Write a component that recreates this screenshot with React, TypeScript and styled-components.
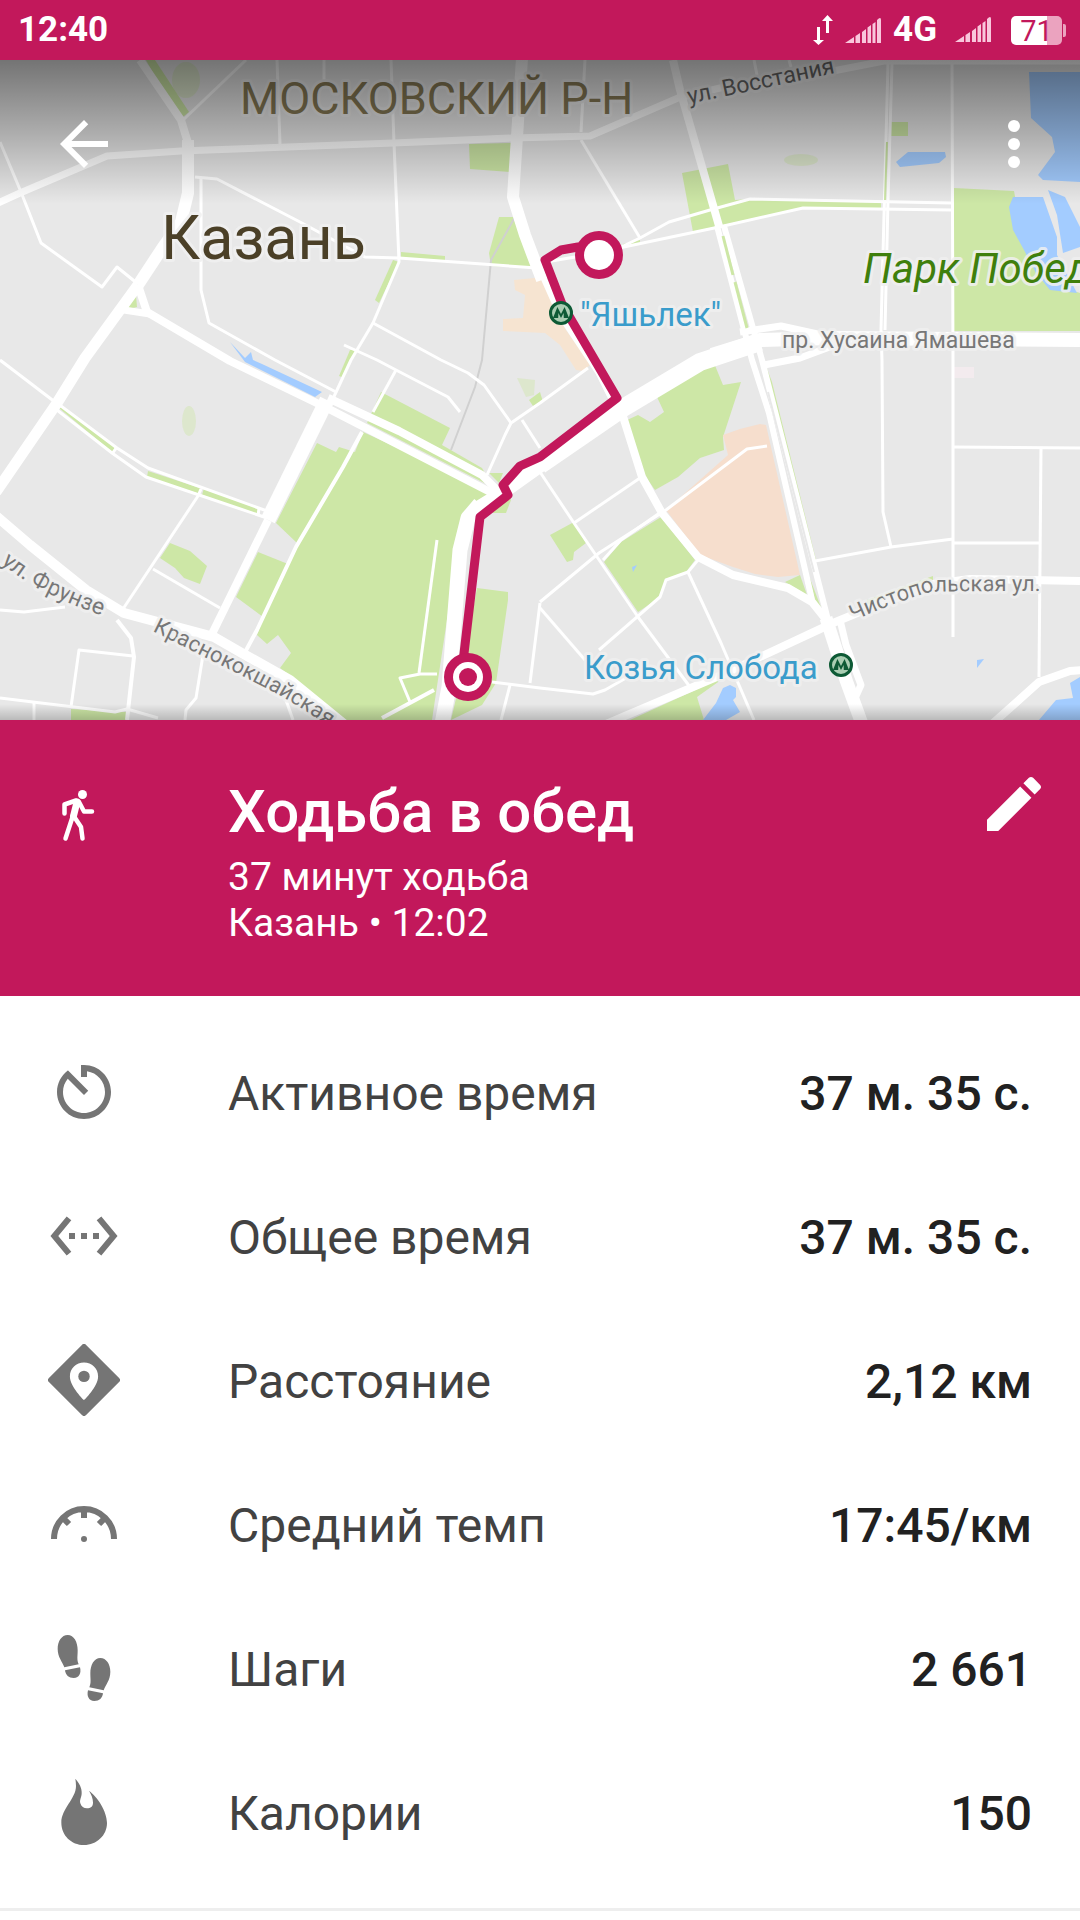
import React from "react";
import styled, { createGlobalStyle } from "styled-components";

const CRIMSON = "#c2185b";

const GlobalStyle = createGlobalStyle`
  *, *::before, *::after { box-sizing: border-box; }
  body { margin: 0; background: #fff; font-family: Roboto, "Noto Sans", sans-serif; }
`;

/* ---------- status bar ---------- */

const StatusBar = styled.div`
  display: flex;
  align-items: center;
  height: 60px;
  padding: 0 14px 0 18px;
  background: ${CRIMSON};
  color: #fff;
  font-size: 35px;
  font-weight: 700;
  line-height: 36px;
`;

const StatusIcons = styled.div`
  display: flex;
  align-items: center;
  gap: 12px;
  margin-left: auto;
`;

const SecondSim = styled.div`
  display: flex;
  gap: 20px;
  margin-left: 6px;
`;

const Battery = styled.div`
  display: flex;
  align-items: center;
  gap: 1px;
`;

const BatteryBody = styled.div<{ $level: number }>`
  width: 51px;
  height: 29px;
  border-radius: 5px;
  background: linear-gradient(90deg, #fff ${(p) => p.$level}%, #eba3bf ${(p) => p.$level}%);
  color: ${CRIMSON};
  font-size: 29px;
  font-weight: 400;
  line-height: 31px;
  text-align: center;
`;

const BatteryNub = styled.div`
  width: 3px;
  height: 13px;
  border-radius: 0 2px 2px 0;
  background: #eba3bf;
`;

/* ---------- map ---------- */

const MapArea = styled.section`
  position: relative;
  overflow: hidden;
`;

const MapDrawing = styled.svg`
  display: block;
  width: 100%;
  aspect-ratio: 18 / 11;
  background: #e8e8e8;
`;

const TopShade = styled.div`
  position: absolute;
  inset: 0 0 auto;
  height: 144px;
  background: linear-gradient(rgba(0, 0, 0, 0.5), rgba(0, 0, 0, 0.26) 50%, rgba(0, 0, 0, 0));
`;

const BottomShade = styled.div`
  position: absolute;
  inset: auto 0 0;
  height: 16px;
  background: linear-gradient(rgba(0, 0, 0, 0), rgba(0, 0, 0, 0.2));
`;

const Toolbar = styled.div`
  position: absolute;
  inset: 0 0 auto;
  display: flex;
  justify-content: space-between;
  padding: 48px 30px 0 48px;
`;

const IconButton = styled.button`
  display: block;
  padding: 0;
  border: 0;
  background: none;
  color: #fff;
  cursor: pointer;
`;

const Icon = styled.svg`
  display: block;
  width: 72px;
  height: 72px;
  fill: currentColor;
`;

const Label = styled.text<{ $size: number; $color: string; $italic?: boolean }>`
  font-size: ${(p) => p.$size}px;
  font-style: ${(p) => (p.$italic ? "italic" : "normal")};
  fill: ${(p) => p.$color};
  stroke: rgba(240, 240, 240, 0.85);
  stroke-width: 6px;
  stroke-linejoin: round;
  paint-order: stroke;
`;

const parks = [
  "146,60 155,60 189,112 179,120",
  "469,144 512,143 510,172 470,169",
  "499,217 513,217 534,268 491,266 489,253",
  "401,252 445,256 445,261 401,258",
  "393,260 399,262 379,303 375,300",
  "136,295 137,307 124,310",
  "350,350 356,350 344,378 339,376",
  "59,408 64,407 115,447 112,452",
  "148,471 200,488 200,494 147,477",
  "204,488 259,508 258,515 202,495",
  "170,543 190,551 207,566 200,584 184,578 175,568 160,558",
  "363,432 496,493 475,510 460,533 436,693 432,720 344,720 300,683 280,668 291,653 278,635 267,644 257,635 263,617 236,597 258,552 288,564 297,543 276,523 317,443 336,452 339,447 355,452",
  "381,392 450,428 442,445 482,468 494,488 367,423",
  "489,473 503,473 499,483",
  "508,490 511,500 506,513 492,513",
  "477,588 508,592 508,600 496,683 482,705 451,720 461,677",
  "529,400 540,392 543,402 533,406",
  "71,709 126,712 126,720 71,720",
  "682,173 728,164 735,200 750,199 881,202 881,208 803,208 723,225 693,232",
  "623,244 640,240 640,243 623,248",
  "891,122 908,122 908,136 891,136",
  "954,188 1014,191 1025,250 1040,280 1080,293 1080,331 954,331",
  "627,420 638,415 650,422 664,412 657,397 709,363 714,363 723,385 741,382 723,437 724,450 700,458 678,477 655,490 643,473",
  "550,535 574,522 586,543 574,552 573,560 567,562",
  "661,517 695,560 686,572 666,580 659,598 638,612 604,562 621,542",
  "785,582 800,575 807,595",
  "809,576 822,610 815,600",
  "766,366 772,382 816,560 813,560",
  "697,697 704,720 630,720 728,675",
  "867,600 933,576 933,582 867,607",
];

const sand = [
  "514,280 545,277 560,305 566,330 585,357 590,365 583,371 576,370 560,345 545,333 503,331 503,319 523,318 525,295 515,290",
];

const malls = ["723,435 740,429 760,424 766,425 800,575 778,577 755,574 733,567 700,555 666,510 728,455"];

const water = [
  "230,342 245,358 251,352 253,360 262,364 322,392 315,397 245,362",
  "896,162 908,152 945,152 946,157 939,163 900,167",
  "1029,72 1080,72 1080,182 1043,180 1038,175 1055,152 1052,137 1031,118",
  "1013,197 1043,197 1057,237 1057,255 1077,293 1050,290 1036,273 1024,250 1013,230 1009,207",
  "1048,190 1065,197 1080,227 1080,247 1063,253 1057,215",
  "1080,677 1070,683 1073,698 1056,700 1039,720 1080,720",
  "977,660 984,659 977,668",
  "632,567 637,565 633,572",
  "723,688 730,685 736,688 736,697 733,700 740,712 726,720 703,720 716,703",
];

const roads: Array<[number, string]> = [
  [7, "-2,203 20,193 107,156 181,151 393,143 513,138 590,136 678,98 720,88 833,71 884,61 1080,61"],
  [8, "140,60 181,120 188,143"],
  [12, "188,140 188,193 181,222 163,247 138,285"],
  [11, "138,285 85,358 57,403 -4,492"],
  [8, "138,285 147,312 230,361 327,408 496,495"],
  [7, "124,310 150,314"],
  [8, "328,398 399,431 448,457 482,475 499,492"],
  [3, "0,142 21,192 41,243 102,287 117,267 138,284"],
  [3, "195,177 217,179 300,222 365,257 399,258 537,268"],
  [3, "201,178 201,290 209,323 275,360 336,392"],
  [3, "391,60 394,143 399,262 373,323 351,360 331,403"],
  [3, "277,60 280,144"],
  [3, "324,60 324,80"],
  [3, "246,60 181,122"],
  [3, "373,323 441,360 468,373 484,385 511,423"],
  [3, "344,345 377,360 396,370 448,397 460,412"],
  [12, "522,58 517,137 513,197 525,235 542,280"],
  [6, "540,270 560,315 598,372 612,400"],
  [3, "585,60 581,132"],
  [3, "581,140 640,238"],
  [8, "673,60 680,90 719,226"],
  [6, "717,226 752,360 769,413 812,600"],
  [6, "724,226 762,360 778,423 828,620"],
  [13, "826,618 846,680 862,724"],
  [3, "619,248 640,238 669,222 710,210 750,199 952,203"],
  [3, "619,248 719,227 803,208 952,210"],
  [3, "540,263 575,257"],
  [3, "754,60 757,75"],
  [3, "789,60 791,67"],
  [3, "888,63 886,140 881,330 882,360 883,512 891,547"],
  [3, "892,63 888,200 885,330"],
  [3, "952,63 953,360 953,637"],
  [14, "1080,340 830,338 760,340 712,355"],
  [7, "740,332 781,326 822,335"],
  [18, "760,342 700,362 623,408 540,465"],
  [14, "545,462 496,497 475,510"],
  [15, "480,504 468,518 460,550 449,687 442,724"],
  [7, "764,365 800,358 835,345"],
  [3, "0,360 55,402"],
  [3, "57,403 117,448 148,468 267,511"],
  [3, "57,410 112,453 146,477 267,518"],
  [3, "117,447 112,454"],
  [3, "259,508 258,516"],
  [3, "201,489 198,496 121,612"],
  [3, "153,569 220,608"],
  [15, "327,400 268,520"],
  [8, "268,520 211,636"],
  [3, "396,370 373,412"],
  [4, "362,432 343,467 296,547 257,630 243,656"],
  [3, "437,540 419,673"],
  [3, "437,674 420,674 400,678 410,702"],
  [4, "434,690 382,718"],
  [3, "492,682 540,688 593,694 605,690 626,678"],
  [3, "510,685 501,720"],
  [3, "540,603 530,683"],
  [3, "487,475 505,435 511,423 540,403 588,368"],
  [3, "522,420 540,448"],
  [10, "-5,515 30,545 86,590 124,613 214,637 240,652 290,680 345,725"],
  [3, "0,610 24,612 65,607"],
  [4, "117,620 131,638 134,657 127,720"],
  [3, "133,656 79,650 71,707"],
  [3, "0,698 115,712 127,709 158,718"],
  [3, "34,703 34,720"],
  [3, "203,655 196,698 186,710 185,720"],
  [3, "286,700 293,720"],
  [8, "621,410 642,477 662,513 698,557 733,575 788,588 812,602 828,622"],
  [3, "767,446 747,449 666,510 599,553 540,602"],
  [3, "640,478 574,523"],
  [3, "661,512 621,540 603,560"],
  [3, "540,472 574,523 638,617 690,687"],
  [3, "698,560 688,572 666,580 660,597 599,650"],
  [3, "688,572 721,643 754,720"],
  [3, "540,608 585,660"],
  [8, "606,724 726,673 760,657 833,623 867,609 933,584 970,579 1080,581"],
  [7, "840,620 846,645 861,685 856,696"],
  [3, "815,561 891,547 953,539"],
  [3, "953,447 1080,448"],
  [3, "1041,448 1039,677"],
  [3, "953,543 1039,543"],
  [8, "992,724 1039,682 1070,671 1084,670"],
];

const route = "599,255 578,247 561,250 545,260 562,304 617,398 540,457 520,466 503,485 508,495 480,517 463,662";

const Metro = ({ x, y }: { x: number; y: number }) => (
  <g transform={`translate(${x} ${y})`}>
    <circle r="10.5" fill="#a9cdb2" stroke="#0d5a35" strokeWidth="3" />
    <path d="M-8 5 L-3.6 -6 L0 1 L3.6 -6 L8 5 H2.8 L2.6 0 L0 5 L-2.6 0 L-2.8 5 Z" fill="#0d5a35" />
  </g>
);

const RouteMap = () => (
  <MapDrawing viewBox="0 60 1080 660" preserveAspectRatio="xMidYMid slice" role="img" aria-label="Маршрут на карте">
    <defs>
      <path id="frunze" d="M1 563 Q36 594 120 622" />
      <path id="krasno" d="M152 631 Q215 662 262 686 T352 744" />
      <path id="chistopol" d="M853 621 Q893 603 930 592 Q945 591 1060 591" />
    </defs>
    {parks.map((p) => <polygon key={p} points={p} fill="#cde7a6" />)}
    <g fill="#cde7a6" opacity="0.4">
      <ellipse cx="186" cy="80" rx="14" ry="18" />
      <ellipse cx="801" cy="160" rx="17" ry="6" />
      <ellipse cx="189" cy="421" rx="7" ry="15" />
      <polygon points="517,378 535,380 534,395 526,397" />
    </g>
    <rect x="954" y="367" width="20" height="11" fill="#f3ebee" />
    {sand.map((p) => <polygon key={p} points={p} fill="#f6e4d1" />)}
    {malls.map((p) => <polygon key={p} points={p} fill="#f6decd" />)}
    {water.map((p) => <polygon key={p} points={p} fill="#a3ccff" />)}
    <polyline points="515,217 491,260 482,360 475,387 451,450" fill="none" stroke="#d0d0d0" strokeWidth="2" />
    <g fill="none" stroke="#fff" strokeLinejoin="round">
      {roads.map(([w, p]) => <polyline key={p} points={p} strokeWidth={w} />)}
    </g>
    <g fill="none" stroke="#cde7a6" strokeWidth="3">
      <polyline points="723,236 733,275" />
      <polyline points="735,282 747,328" />
      <polyline points="887,142 885,200" strokeWidth="2" />
    </g>
    <polyline points="768,392 814,572" fill="none" stroke="#e8e8e8" strokeWidth="2" />

    <Label $size={45} $color="#887b56" x="240" y="114">МОСКОВСКИЙ Р-Н</Label>
    <Label $size={61} $color="#4b4027" x="161" y="259">Казань</Label>
    <Label $size={42} $color="#3f7f0c" $italic x="863" y="283">Парк Победы</Label>
    <Label $size={33} $color="#3a9ccb" x="580" y="326">"Яшьлек"</Label>
    <Label $size={33} $color="#3a9ccb" x="584" y="679">Козья Слобода</Label>
    <Label $size={23} $color="#777" x="782" y="348">пр. Хусаина Ямашева</Label>
    <Label $size={23} $color="#666" transform="translate(689 104) rotate(-12)">ул. Восстания</Label>
    <Label $size={23} $color="#777"><textPath href="#frunze">ул. Фрунзе</textPath></Label>
    <Label $size={22} $color="#777"><textPath href="#krasno">Краснококшайская</textPath></Label>
    <Label $size={22} $color="#777"><textPath href="#chistopol">Чистопольская ул.</textPath></Label>

    <polyline points={route} fill="none" stroke={CRIMSON} strokeWidth="9" strokeLinejoin="round" />
    <Metro x={561} y={313} />
    <Metro x={841} y={665} />
    <circle cx="599" cy="255" r="24" fill={CRIMSON} />
    <circle cx="599" cy="255" r="15" fill="#fff" />
    <circle cx="468" cy="677" r="24" fill={CRIMSON} />
    <circle cx="468" cy="677" r="15" fill="#fff" />
    <circle cx="468" cy="677" r="9" fill={CRIMSON} />
  </MapDrawing>
);

/* ---------- activity header ---------- */

const ActivityHeader = styled.header`
  display: flex;
  align-items: flex-start;
  padding: 48px 30px 48px 48px;
  background: ${CRIMSON};
  color: #fff;
`;

const WalkIcon = styled(Icon)`
  margin: 12px 108px 0 0;
`;

const ActivityText = styled.div`
  flex: 1;
  padding: 6px 0 2px;
`;

const Title = styled.h1`
  margin: 0 0 4px;
  font-size: 60px;
  font-weight: 500;
  line-height: 76px;
`;

const Subtitle = styled.p`
  margin: 0;
  font-size: 39px;
  line-height: 46px;
`;

/* ---------- statistics ---------- */

const Stats = styled.dl`
  margin: 0;
  padding: 24px 0;
  border-bottom: 3px solid #eee;
`;

const StatRow = styled.div`
  display: grid;
  grid-template-columns: 72px 1fr auto;
  column-gap: 108px;
  align-items: center;
  height: 144px;
  padding: 0 48px;
  font-size: 48px;
  line-height: 60px;
  color: #757575;
`;

const StatName = styled.dt`
  padding-top: 4px;
  color: #424242;
`;

const StatValue = styled.dd`
  margin: 0;
  padding-top: 4px;
  font-weight: 500;
  color: #212121;
`;

const Glyph = ({ children, box = 24 }: { children: React.ReactNode; box?: number }) => (
  <Icon viewBox={`0 0 ${box} ${box}`} aria-hidden="true">{children}</Icon>
);

const foot = (
  <>
    <path d="M59 9C41 9 29 28 29 50C29 76 43 88 49 106L92 97C86 83 89 74 89 55C89 30 78 9 59 9Z" />
    <path d="M51 115L96 106C100 122 95 138 77 138C62 138 53 130 51 115Z" />
  </>
);

const stats = [
  {
    name: "Активное время",
    value: "37 м. 35 с.",
    icon: (
      <Glyph>
        <path d="M11 3v4h2V5.08c3.39.49 6 3.39 6 6.92 0 3.87-3.13 7-7 7s-7-3.13-7-7c0-1.68.59-3.22 1.58-4.42L12 13l1.41-1.41-6.8-6.8v.02C4.42 6.45 3 9.05 3 12c0 4.97 4.02 9 9 9s9-4.03 9-9-4.03-9-9-9h-1z" />
      </Glyph>
    ),
  },
  {
    name: "Общее время",
    value: "37 м. 35 с.",
    icon: (
      <Glyph>
        <path d="M7.77 6.76L6.23 5.48.82 12l5.41 6.52 1.54-1.28L3.42 12l4.35-5.24zM7 13h2v-2H7v2zm10-2h-2v2h2v-2zm-6 2h2v-2h-2v2zm6.77-7.52l-1.54 1.28L20.58 12l-4.35 5.24 1.54 1.28L23.18 12l-5.41-6.52z" />
      </Glyph>
    ),
  },
  {
    name: "Расстояние",
    value: "2,12 км",
    icon: (
      <Glyph>
        <path
          fillRule="evenodd"
          d="M11.3.3a1 1 0 0 1 1.4 0l11 11a1 1 0 0 1 0 1.4l-11 11a1 1 0 0 1-1.4 0l-11-11a1 1 0 0 1 0-1.4zM12 6.2c-2.6 0-4.7 2-4.7 4.6 0 3.4 4.7 7.9 4.7 7.9s4.7-4.5 4.7-7.9c0-2.6-2.1-4.6-4.7-4.6z"
        />
        <circle cx="12" cy="10.8" r="1.9" />
      </Glyph>
    ),
  },
  {
    name: "Средний темп",
    value: "17:45/км",
    icon: (
      <Glyph>
        <path
          d="M2 17a10 10 0 0 1 20 0M12 6.5V10M4.9 9.9l2.1 2.1M19.1 9.9L17 12"
          fill="none"
          stroke="currentColor"
          strokeWidth="2"
        />
        <circle cx="12" cy="17" r="1" />
      </Glyph>
    ),
  },
  {
    name: "Шаги",
    value: "2 661",
    icon: (
      <Glyph box={216}>
        {foot}
        <g transform="translate(216 69) scale(-1 1)">{foot}</g>
      </Glyph>
    ),
  },
  {
    name: "Калории",
    value: "150",
    icon: (
      <Glyph box={216}>
        <path d="M82 8C94 22 102 36 101 52C101 64 94 72 97 82C100 92 107 97 117 97C128 97 135 91 135 80C135 66 129 54 123 44C148 62 177 106 177 141C177 178 146 207 108 207C70 207 40 178 40 140C40 98 84 68 84 30C84 22 83 15 82 8Z" />
      </Glyph>
    ),
  },
];

const Signal = () => (
  <svg width="36" height="26" viewBox="0 0 36 26" fill="#f9c6dc" aria-hidden="true">
    <path d="M0 26L9 20V26ZM10.500 19L15 16V26H10.500ZM17 15L21 12V26H17ZM22.500 10.500L26 8V26H22.500ZM27.500 7L30.500 5V26H27.500ZM32 3Q36 -1 36 3V26H32Z" />
  </svg>
);

export default function App() {
  return (
    <>
      <GlobalStyle />
      <StatusBar>
        <time>12:40</time>
        <StatusIcons>
          <svg width="20" height="30" viewBox="0 0 20 30" fill="#fff" aria-hidden="true">
            <path d="M4 12h3v13h4l-5.500 5L0 25h4zM13 18V6H9l5.500-6L20 6h-4v12z" />
          </svg>
          <Signal />
          <span>4G</span>
          <SecondSim>
            <Signal />
            <Battery>
              <BatteryBody $level={70}>71</BatteryBody>
              <BatteryNub />
            </Battery>
          </SecondSim>
        </StatusIcons>
      </StatusBar>

      <MapArea>
        <RouteMap />
        <TopShade />
        <BottomShade />
        <Toolbar>
          <IconButton type="button" aria-label="Назад">
            <Glyph>
              <path d="M20 11H7.83l5.59-5.59L12 4l-8 8 8 8 1.41-1.41L7.83 13H20v-2z" />
            </Glyph>
          </IconButton>
          <IconButton type="button" aria-label="Ещё">
            <Glyph>
              <circle cx="12" cy="6" r="2" />
              <circle cx="12" cy="12" r="2" />
              <circle cx="12" cy="18" r="2" />
            </Glyph>
          </IconButton>
        </Toolbar>
      </MapArea>

      <ActivityHeader>
        <WalkIcon viewBox="0 0 72 72" aria-hidden="true">
          <circle cx="34.500" cy="14.500" r="4.500" />
          <g fill="none" stroke="currentColor" strokeLinecap="round" strokeLinejoin="round">
            <path d="M28 20.500L16.500 24.500V33.500M25.500 34L17.500 58.500M25 35L33 47L34.500 58.500M31 22L36 31.500H44" strokeWidth="4.500" />
            <path d="M29 22L25.500 36" strokeWidth="7" />
          </g>
        </WalkIcon>
        <ActivityText>
          <Title>Ходьба в обед</Title>
          <Subtitle>37 минут ходьба</Subtitle>
          <Subtitle>Казань • 12:02</Subtitle>
        </ActivityText>
        <IconButton type="button" aria-label="Изменить">
          <Glyph>
            <path d="M3 17.250V21h3.750L17.810 9.940l-3.750-3.750L3 17.250zM20.710 7.040c.39-.39.39-1.020 0-1.410l-2.340-2.340c-.39-.39-1.020-.39-1.410 0l-1.830 1.830 3.750 3.750 1.830-1.830z" />
          </Glyph>
        </IconButton>
      </ActivityHeader>

      <Stats>
        {stats.map((s) => (
          <StatRow key={s.name}>
            {s.icon}
            <StatName>{s.name}</StatName>
            <StatValue>{s.value}</StatValue>
          </StatRow>
        ))}
      </Stats>
    </>
  );
}
